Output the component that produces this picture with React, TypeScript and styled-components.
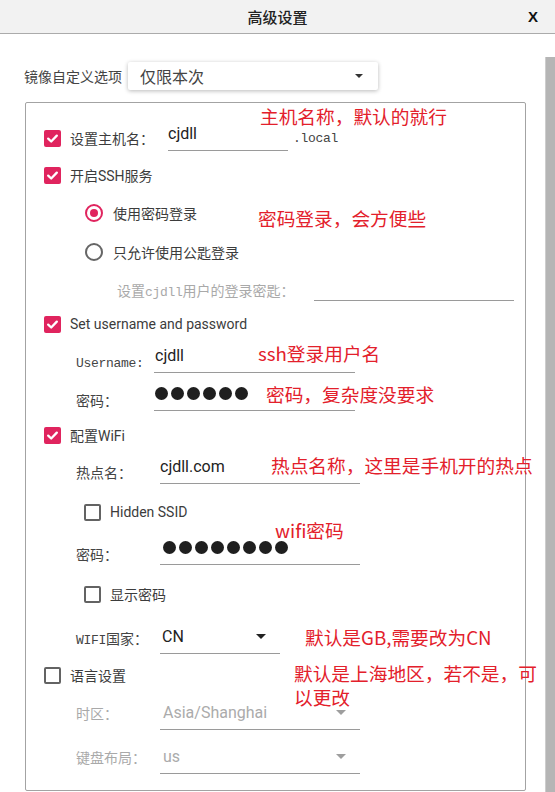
import React from "react";
import styled, { createGlobalStyle } from "styled-components";

const PINK = "#e0245e";
const RED = "#e3202b";
const CJK = `"Noto Sans CJK SC", sans-serif`;
const UI = `Roboto, "Noto Sans CJK SC", sans-serif`;
const MONO = `"Liberation Mono", "DejaVu Sans Mono", monospace`;

const GlobalStyle = createGlobalStyle`
  html, body { margin: 0; padding: 0; background: #fff; }
  body { font-family: ${UI}; }
  *, *::before, *::after { box-sizing: border-box; }
`;

const Window = styled.div`
  position: relative;
  width: 555px;
  height: 792px;
  overflow: hidden;
  display: flex;
  flex-direction: column;
  background: #fff;
`;

const TitleBar = styled.header`
  height: 34px;
  flex: none;
  display: grid;
  grid-template-columns: 1fr auto 1fr;
  align-items: center;
  background: #f2f2f2;
  border-bottom: 1px solid #ababab;
`;

const Title = styled.h1`
  grid-column: 2;
  margin: 0;
  font: 500 15px ${CJK};
  color: #222;
`;

const Close = styled.button`
  justify-self: end;
  margin-right: 17px;
  border: 0;
  background: none;
  padding: 0;
  font: 700 15px "Liberation Sans", Arial, sans-serif;
  color: #111;
`;

const Body = styled.div`
  flex: 1;
  display: flex;
  min-height: 0;
`;

const Content = styled.main`
  flex: 1;
  padding: 28px 0 0 24px;
  display: flex;
  flex-direction: column;
`;

const ScrollTrack = styled.div`
  width: 10px;
  flex: none;
  padding-top: 23px;
  display: flex;
`;

const ScrollThumb = styled.div`
  flex: 1;
  background: #b5b5b5;
  border-left: 1px solid #cdcdcd;
`;

const TopRow = styled.div`
  display: flex;
  align-items: center;
  height: 28px;
`;

const TopLabel = styled.span`
  width: 104px;
  font: 14px ${CJK};
  color: #444;
`;

const Dropdown = styled.div`
  width: 250px;
  height: 28px;
  display: flex;
  align-items: center;
  justify-content: space-between;
  padding: 0 15px 0 12px;
  background: #fff;
  border-radius: 2px;
  box-shadow: 0 1px 4px rgba(0, 0, 0, 0.28);
  font: 16px ${CJK};
  color: #444;
`;

const Caret = styled.span<{ $w: number; $color: string }>`
  width: 0;
  height: 0;
  flex: none;
  border-left: ${(p) => p.$w / 2}px solid transparent;
  border-right: ${(p) => p.$w / 2}px solid transparent;
  border-top: ${(p) => Math.round(p.$w / 2)}px solid ${(p) => p.$color};
`;

const Panel = styled.section`
  margin: 12px 0 0 1px;
  width: 501px;
  height: 689px;
  border: 1px solid #a3a3a3;
  border-radius: 2px;
  padding-top: 20px;
  display: flex;
  flex-direction: column;
`;

const Row = styled.div<{ $indent: number; $mt?: number }>`
  display: flex;
  align-items: center;
  flex: none;
  height: 30px;
  margin-top: ${(p) => p.$mt ?? 0}px;
  padding-left: ${(p) => p.$indent}px;
`;

const Box = styled.span<{ $checked?: boolean }>`
  width: 17px;
  height: 17px;
  flex: none;
  border-radius: 2px;
  display: inline-flex;
  align-items: center;
  justify-content: center;
  background: ${(p) => (p.$checked ? PINK : "#fff")};
  border: ${(p) => (p.$checked ? "none" : "2px solid #636363")};
`;

const Radio = styled.span<{ $on?: boolean }>`
  width: 18px;
  height: 18px;
  flex: none;
  border-radius: 50%;
  border: 2px solid ${(p) => (p.$on ? PINK : "#666")};
  display: inline-flex;
  align-items: center;
  justify-content: center;
  &::after {
    content: "";
    width: 8px;
    height: 8px;
    border-radius: 50%;
    background: ${(p) => (p.$on ? PINK : "transparent")};
  }
`;

const OptionLabel = styled.span<{ $w?: number; $gap?: number }>`
  margin-left: ${(p) => p.$gap ?? 9}px;
  ${(p) => (p.$w ? `width: ${p.$w}px; flex: none;` : "")}
  font: 14px ${UI};
  color: #3c3c3c;
`;

const FieldLabel = styled.span<{ $w: number; $muted?: boolean }>`
  width: ${(p) => p.$w}px;
  flex: none;
  font: 14px ${CJK};
  color: ${(p) => (p.$muted ? "#a9a9a9" : "#444")};
`;

const Latin = styled.span`
  font: 13px ${MONO};
  letter-spacing: -0.3px;
`;

const Field = styled.div<{ $w: number; $raise?: number; $muted?: boolean; $pad?: number }>`
  width: ${(p) => p.$w}px;
  height: 34px;
  flex: none;
  display: flex;
  align-items: center;
  justify-content: space-between;
  padding: 0 14px 0 ${(p) => p.$pad ?? 0}px;
  margin-bottom: ${(p) => (p.$raise ?? 0) * 2}px;
  border-bottom: 1px solid #9a9a9a;
  font: 16px ${UI};
  color: ${(p) => (p.$muted ? "#ababab" : "#222")};
`;

const Suffix = styled.span`
  margin-left: 5px;
  font: 13px ${MONO};
  letter-spacing: -0.3px;
  color: #444;
`;

const Dots = styled.span`
  display: flex;
  gap: 3px;
`;

const Dot = styled.span`
  width: 13px;
  height: 13px;
  border-radius: 50%;
  background: #1f1f1f;
`;

const Note = styled.div<{ $x: number; $y: number; $w?: number }>`
  position: absolute;
  left: ${(p) => p.$x}px;
  top: ${(p) => p.$y}px;
  width: ${(p) => (p.$w ? `${p.$w}px` : "auto")};
  white-space: ${(p) => (p.$w ? "normal" : "nowrap")};
  font: 18.7px/24px ${CJK};
  color: ${RED};
`;

const Check = () => (
  <svg width="13" height="13" viewBox="0 0 13 13" aria-hidden>
    <path d="M2.2 6.6 L5.2 9.5 L10.8 3.6" fill="none" stroke="#fff" strokeWidth="2.3" strokeLinecap="round" strokeLinejoin="round" />
  </svg>
);

const CheckBox = ({ checked }: { checked?: boolean }) => (
  <Box $checked={checked}>{checked && <Check />}</Box>
);

const PasswordDots = ({ n }: { n: number }) => (
  <Dots>
    {Array.from({ length: n }, (_, i) => (
      <Dot key={i} />
    ))}
  </Dots>
);

export default function App() {
  return (
    <>
      <GlobalStyle />
      <Window>
        <TitleBar>
          <Title>高级设置</Title>
          <Close>X</Close>
        </TitleBar>
        <Body>
          <Content>
            <TopRow>
              <TopLabel>镜像自定义选项</TopLabel>
              <Dropdown>
                仅限本次
                <Caret $w={8} $color="#333" />
              </Dropdown>
            </TopRow>
            <Panel>
              <Row $indent={18}>
                <CheckBox checked />
                <OptionLabel $w={98}>设置主机名：</OptionLabel>
                <Field $w={120} $raise={4}>cjdll</Field>
                <Suffix>.local</Suffix>
              </Row>
              <Row $indent={18} $mt={7}>
                <CheckBox checked />
                <OptionLabel>开启SSH服务</OptionLabel>
              </Row>
              <Row $indent={59} $mt={8}>
                <Radio $on />
                <OptionLabel $gap={10}>使用密码登录</OptionLabel>
              </Row>
              <Row $indent={59} $mt={9}>
                <Radio />
                <OptionLabel $gap={10}>只允许使用公匙登录</OptionLabel>
              </Row>
              <Row $indent={91} $mt={8}>
                <FieldLabel $w={197} $muted>
                  设置<Latin>cjdll</Latin>用户的登录密匙：
                </FieldLabel>
                <Field $w={200} $raise={6} />
              </Row>
              <Row $indent={18} $mt={4}>
                <CheckBox checked />
                <OptionLabel>Set username and password</OptionLabel>
              </Row>
              <Row $indent={50} $mt={7}>
                <FieldLabel $w={78}>
                  <Latin>Username:</Latin>
                </FieldLabel>
                <Field $w={201} $raise={5} $pad={1}>cjdll</Field>
              </Row>
              <Row $indent={50} $mt={9}>
                <FieldLabel $w={78}>密码：</FieldLabel>
                <Field $w={201} $raise={6} $pad={1}>
                  <PasswordDots n={6} />
                </Field>
              </Row>
              <Row $indent={18} $mt={5}>
                <CheckBox checked />
                <OptionLabel>配置WiFi</OptionLabel>
              </Row>
              <Row $indent={50} $mt={7}>
                <FieldLabel $w={84}>热点名：</FieldLabel>
                <Field $w={200} $raise={5}>cjdll.com</Field>
              </Row>
              <Row $indent={58} $mt={10}>
                <CheckBox />
                <OptionLabel>Hidden SSID</OptionLabel>
              </Row>
              <Row $indent={50} $mt={12}>
                <FieldLabel $w={84}>密码：</FieldLabel>
                <Field $w={200} $raise={6} $pad={3}>
                  <PasswordDots n={8} />
                </Field>
              </Row>
              <Row $indent={58} $mt={10}>
                <CheckBox />
                <OptionLabel>显示密码</OptionLabel>
              </Row>
              <Row $indent={50} $mt={14}>
                <FieldLabel $w={84}>
                  <Latin>WIFI</Latin>国家：
                </FieldLabel>
                <Field $w={120} $raise={1} $pad={2}>
                  CN
                  <Caret $w={10} $color="#222" />
                </Field>
              </Row>
              <Row $indent={18} $mt={7}>
                <CheckBox />
                <OptionLabel>语言设置</OptionLabel>
              </Row>
              <Row $indent={50} $mt={8}>
                <FieldLabel $w={84} $muted>时区：</FieldLabel>
                <Field $w={200} $muted $pad={3}>
                  Asia/Shanghai
                  <Caret $w={10} $color="#9e9e9e" />
                </Field>
              </Row>
              <Row $indent={50} $mt={14}>
                <FieldLabel $w={84} $muted>键盘布局：</FieldLabel>
                <Field $w={200} $muted $pad={3}>
                  us
                  <Caret $w={10} $color="#9e9e9e" />
                </Field>
              </Row>
            </Panel>
          </Content>
          <ScrollTrack>
            <ScrollThumb />
          </ScrollTrack>
        </Body>
        <Note $x={260} $y={104}>主机名称，默认的就行</Note>
        <Note $x={258} $y={206}>密码登录，会方便些</Note>
        <Note $x={258} $y={341}>ssh登录用户名</Note>
        <Note $x={266} $y={382}>密码，复杂度没要求</Note>
        <Note $x={271} $y={453}>热点名称，这里是手机开的热点</Note>
        <Note $x={275} $y={518}>wifi密码</Note>
        <Note $x={305} $y={625}>默认是GB,需要改为CN</Note>
        <Note $x={294} $y={661} $w={247}>默认是上海地区，若不是，可以更改</Note>
      </Window>
    </>
  );
}
